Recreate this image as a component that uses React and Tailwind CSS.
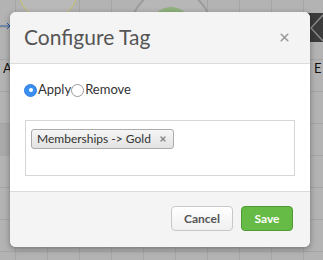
import { X } from 'lucide-react';

const gridCols = [15, 47, 79, 111, 143, 175, 207, 239, 271, 303];
const gridRows = [27, 59, 91, 123, 155, 187, 219, 251];

const Canvas = () => (
  <div className="absolute inset-0 bg-[#b3b3b3] overflow-hidden">
    {/* grid */}
    {gridCols.map((x) => (
      <div key={'c' + x} className="absolute top-0 bottom-0 w-px bg-[#a6a6a6]" style={{ left: x }} />
    ))}
    {gridRows.map((y) => (
      <div key={'r' + y} className="absolute left-0 right-0 h-px bg-[#a6a6a6]" style={{ top: y }} />
    ))}
    <div className="absolute left-0 top-[124px] w-[15px] h-[32px] bg-[#a9a9a9]" />

    {/* nodes peeking out */}
    <div className="absolute left-[18px] top-[-40px] w-[60px] h-[60px] rounded-full border border-[#c9c46a] bg-[#b9b9b9]" />
    <div className="absolute left-[130px] top-[-12px] w-[82px] h-[82px] rounded-full border-2 border-[#9c9c9c] bg-[#b7b7b7]" />
    <div className="absolute left-[151px] top-[7px] w-[40px] h-[40px] rounded-full bg-[#8fb27d]" />
    <div className="absolute left-[303px] top-[13px] w-[30px] h-[29px] bg-[#3b3b3b]" />
    <svg className="absolute left-[309px] top-[14px]" width="14" height="28" viewBox="0 0 14 28">
      <path d="M14 1 L2 14 L14 27" stroke="#8a8a8a" strokeWidth="1.5" fill="none" />
    </svg>
    <svg className="absolute left-0 top-[22px]" width="12" height="8" viewBox="0 0 12 8">
      <path d="M0 4 H10 M7 1 L10 4 L7 7" stroke="#2e5f9e" strokeWidth="1" fill="none" />
    </svg>
    <span className="absolute left-[3px] top-[62px] text-[13px] leading-none text-[#111]">A</span>
    <span className="absolute left-[314px] top-[62px] text-[13px] leading-none text-[#111]">E</span>
  </div>
);

const Radio = ({ checked, label }) => (
  <label className="flex items-center">
    <span
      className={`w-[13px] h-[13px] rounded-full flex items-center justify-center ${
        checked ? 'bg-[#3b8ff0] border border-[#2f7fe0]' : 'bg-white border border-[#9a9a9a]'
      }`}
    >
      {checked && <span className="w-[4px] h-[4px] rounded-full bg-white" />}
    </span>
    <span className="ml-[1px] text-[13px] text-[#333]">{label}</span>
  </label>
);

export default function App() {
  return (
    <div
      className="relative w-[323px] h-[260px] overflow-hidden"
      style={{ fontFamily: 'Lato, "Liberation Sans", sans-serif' }}
    >
      <Canvas />

      <div className="absolute left-[10px] top-[12px] w-[300px] h-[235px] rounded-[6px] overflow-hidden bg-white shadow-[0_2px_6px_rgba(0,0,0,0.35)] flex flex-col">
        {/* Header */}
        <div className="h-[52px] bg-[#f4f4f4] border-b border-[#dcdcdc] flex items-center justify-between pl-[14px] pr-[19px]">
          <h3 className="text-[21px] text-[#555] font-normal leading-none pb-[2px]">Configure Tag</h3>
          <X className="w-[13px] h-[13px] text-[#9a9a9a]" strokeWidth={3} />
        </div>

        {/* Body */}
        <div className="flex-1 bg-white pl-[14px] pr-[15px] pt-[19px]">
          <div className="flex items-center h-[14px]">
            <Radio checked label="Apply" />
            <Radio label="Remove" />
          </div>
          <div className="mt-[23px] ml-[1px] h-[56px] border border-[#d6d6d6] px-[5px] pt-[4px]">
            <span className="inline-flex items-center h-[20px] pl-[5px] pr-[6px] rounded-[3px] border border-[#aaa] bg-gradient-to-b from-[#f6f6f6] to-[#e2e2e2] text-[12px] text-[#333]">
              Memberships -&gt; Gold
              <X className="ml-[8px] w-[8px] h-[8px] text-[#888]" strokeWidth={4} />
            </span>
          </div>
        </div>

        {/* Footer */}
        <div className="h-[56px] bg-[#f4f4f4] border-t border-[#dcdcdc] flex items-center justify-end gap-[8px] pr-[17px] pb-[2px]">
          <button className="w-[62px] h-[25px] rounded-[4px] border border-[#c8c8c8] bg-gradient-to-b from-white to-[#f0f0f0] text-[12px] font-bold text-[#555]">
            Cancel
          </button>
          <button className="w-[52px] h-[25px] rounded-[4px] border border-[#4f9a33] bg-[#66bb47] text-[12px] font-bold text-white">
            Save
          </button>
        </div>
      </div>
    </div>
  );
}
